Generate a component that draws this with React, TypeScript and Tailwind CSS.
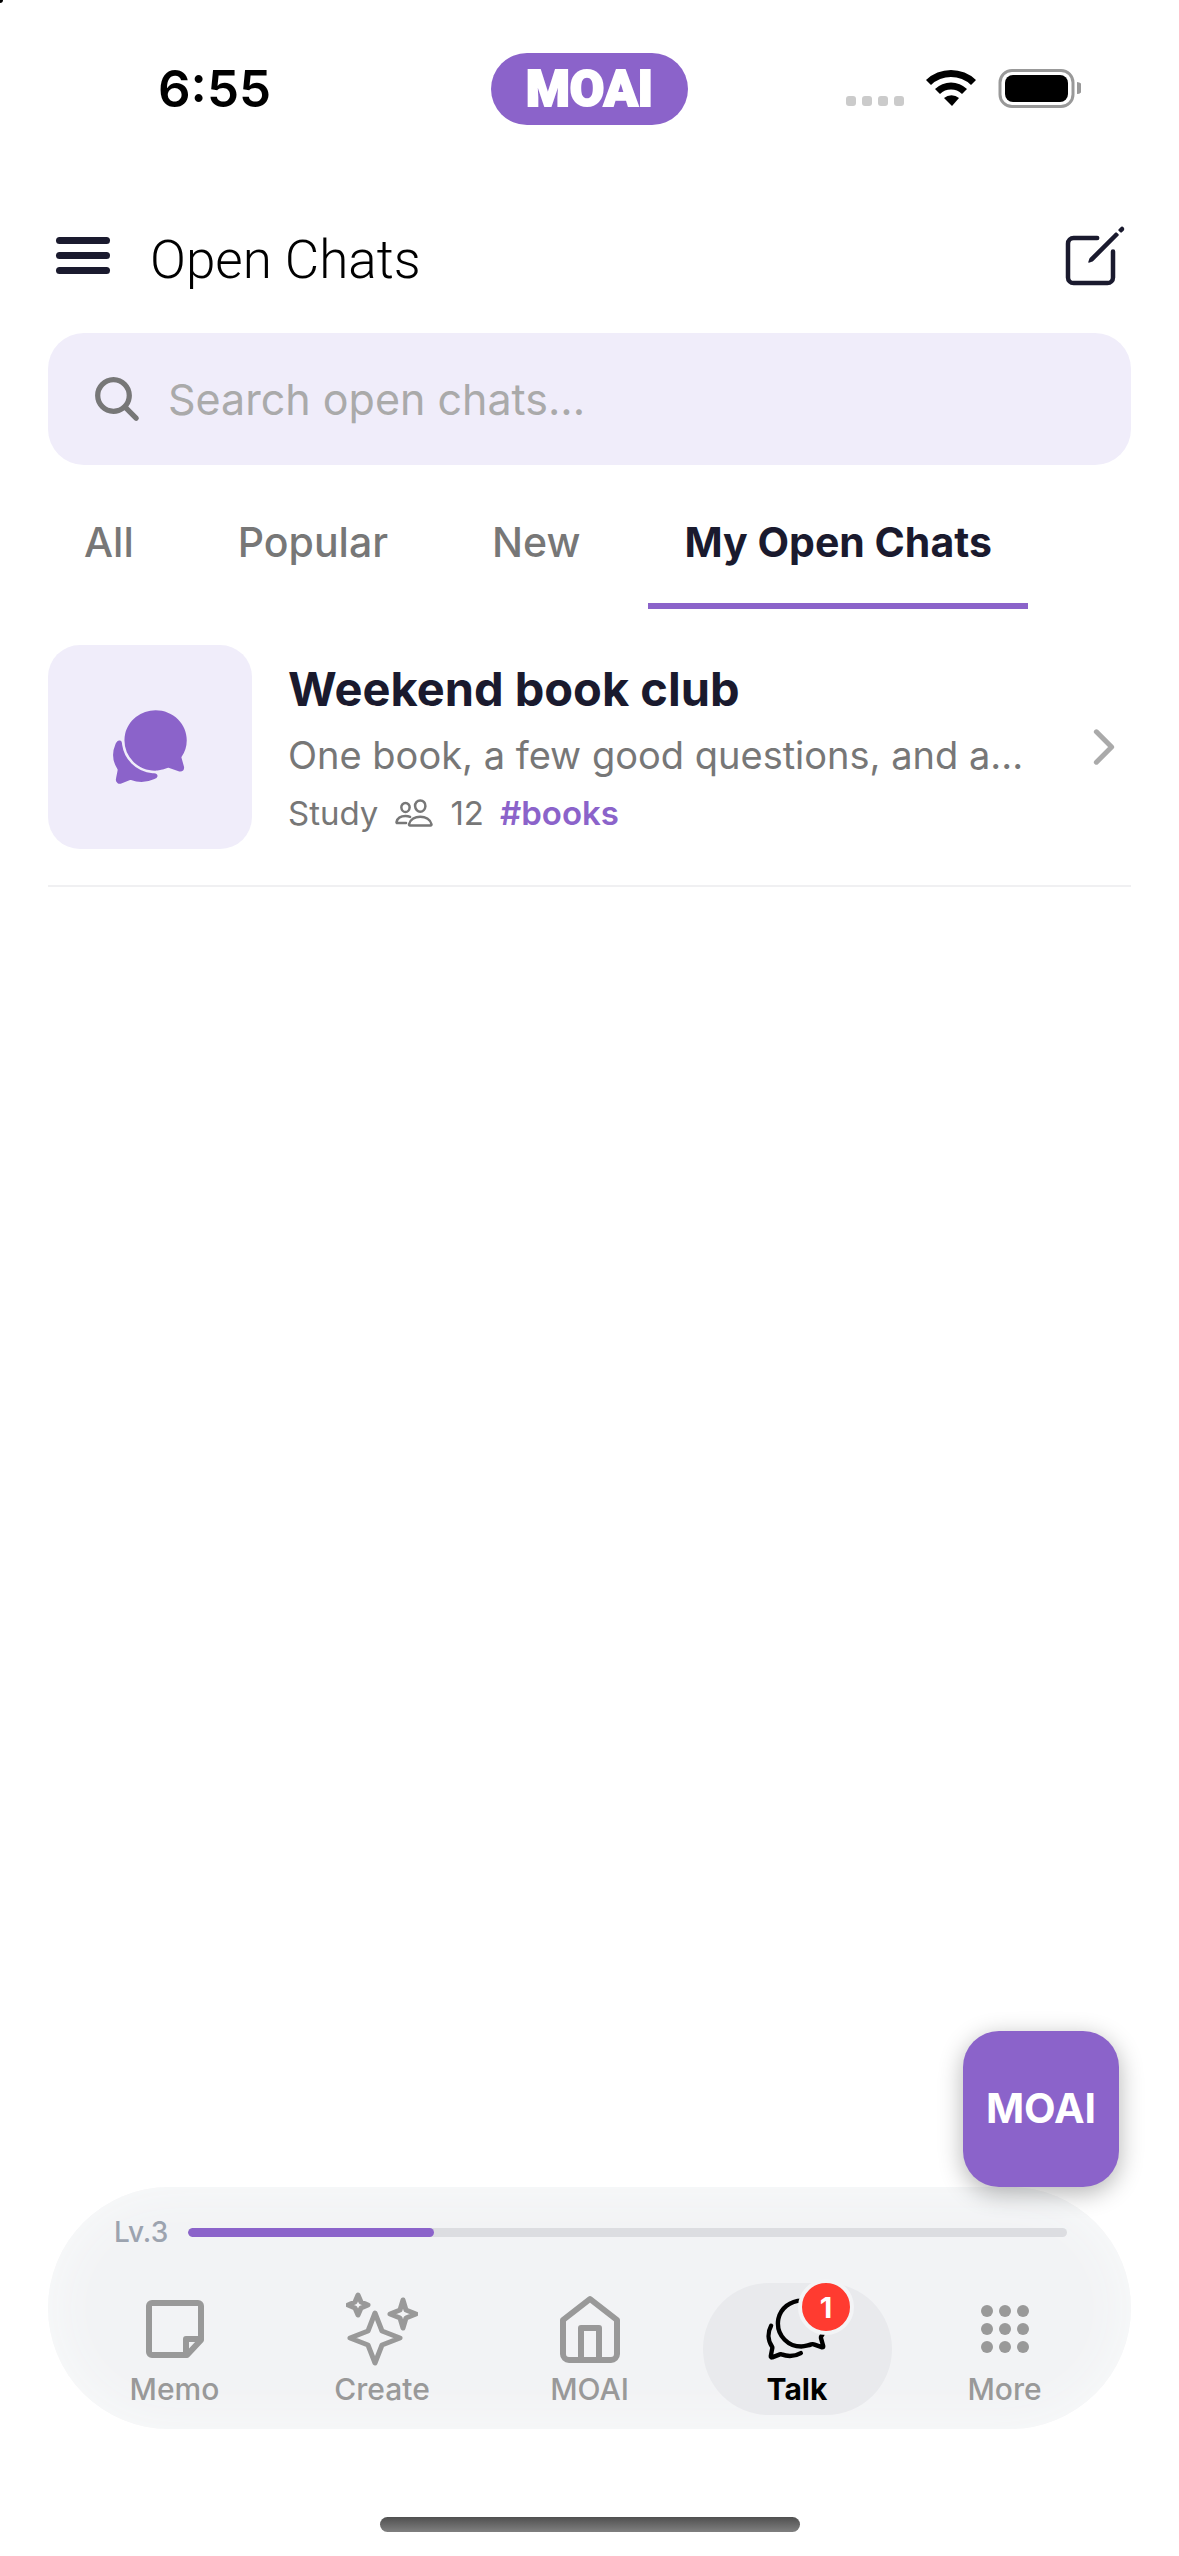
import React from "react";
import clsx from "clsx";
import {
  IoChatbubbles,
  IoChatbubblesOutline,
  IoChevronForward,
  IoCreateOutline,
  IoPeopleOutline,
  IoSearch,
} from "react-icons/io5";

const tabs = ["All", "Popular", "New", "My Open Chats"];

const rooms = [
  {
    name: "Weekend book club",
    description: "One book, a few good questions, and a...",
    category: "Study",
    members: 12,
    tag: "#books",
  },
];

const stroke = {
  fill: "none",
  stroke: "currentColor",
  strokeLinecap: "round" as const,
  strokeLinejoin: "round" as const,
};

function MemoIcon() {
  return (
    <svg viewBox="0 0 60 60" className="size-[60px]" {...stroke} strokeWidth="6">
      <path d="M7 4H53a3 3 0 0 1 3 3V41L42 56H7a3 3 0 0 1-3-3V7a3 3 0 0 1 3-3z" />
      <path d="M41 54V40H55" />
    </svg>
  );
}

function CreateIcon() {
  return (
    <svg viewBox="0 0 72 74" className="h-[74px] w-[72px]" {...stroke} strokeWidth="5">
      <path d="M29 21l7 18 18 7-18 7-7 18-7-18-18-7 18-7z" />
      <path d="M57 8l3 10 10 4-10 4-3 10-3-10-10-4 10-4z" />
      <path d="M12 3l3 7 7 3-7 3-3 7-3-7-7-3 7-3z" />
    </svg>
  );
}

function HomeIcon() {
  return (
    <svg viewBox="0 0 60 68" className="h-[68px] w-[60px]" {...stroke} strokeWidth="6">
      <path d="M3 25L30 4l27 21v34a6 6 0 0 1-6 6H9a6 6 0 0 1-6-6z" />
      <path d="M21 64V33H39V64" />
    </svg>
  );
}

function MoreIcon() {
  return (
    <svg viewBox="0 0 48 50" className="h-[50px] w-12" fill="currentColor">
      {[7, 25, 43].map((y) =>
        [6, 24, 42].map((x) => <circle key={`${x}-${y}`} cx={x} cy={y} r="6" />)
      )}
    </svg>
  );
}

function StatusBar() {
  return (
    <div className="grid h-[178px] grid-cols-3 items-center">
      <p className="pl-[158px] text-[51px] leading-[60px] font-semibold text-black">
        6:55
      </p>
      <div className="flex h-[72px] w-[197px] items-center justify-center justify-self-center rounded-full bg-[#8b63ca] font-[Roboto,sans-serif] text-[50px] leading-none font-black text-white [-webkit-text-stroke:2px_white]">
        MOAI
      </div>
      <div className="flex items-center justify-end pr-[98px]">
        <svg viewBox="0 0 236 40" className="h-10 w-[236px]">
          {[0, 16, 32, 48].map((x) => (
            <rect key={x} x={x + 1} y="27" width="10" height="10" rx="3" fill="#cbcbcb" />
          ))}
          <path d="M81 11a36 36 0 0 1 50 0l-5 5a29 29 0 0 0-40 0z" />
          <path d="M90 20a23 23 0 0 1 32 0l-5 5a16 16 0 0 0-22 0z" />
          <path d="M99 29a12 12 0 0 1 15 0l-7 8z" />
          <rect x="155" y="1.5" width="73" height="36" rx="12" fill="none" stroke="#999" strokeWidth="3" />
          <rect x="160" y="6" width="63" height="27" rx="8" />
          <path d="M232 13a6 6 0 0 1 0 12z" fill="#999" />
        </svg>
      </div>
    </div>
  );
}

function Header() {
  return (
    <header className="flex h-[155px] items-center gap-10 pr-12 pl-14">
      <button aria-label="Menu" className="flex w-[54px] flex-col gap-2">
        <span className="h-[7px] w-full rounded-full bg-[#1a1a2e]" />
        <span className="h-[7px] w-full rounded-full bg-[#1a1a2e]" />
        <span className="h-[7px] w-full rounded-full bg-[#1a1a2e]" />
      </button>
      <h1 className="flex-1 pt-2 font-[Roboto,sans-serif] text-[53px] leading-[64px] font-light text-black">
        Open Chats
      </h1>
      <button aria-label="New open chat" className="text-[#1a1a2e]">
        <IoCreateOutline size={72} />
      </button>
    </header>
  );
}

function RoomRow({ room }: { room: (typeof rooms)[number] }) {
  return (
    <a
      href="#room"
      className="flex items-center gap-9 border-b-2 border-[#f0f0f2] pt-9 pb-9"
    >
      <div className="flex size-[204px] shrink-0 items-center justify-center rounded-[32px] bg-[#f0edfa] text-[#8b63ca]">
        <IoChatbubbles size={84} />
      </div>
      <div className="min-w-0 flex-1">
        <h2 className="text-[47px] leading-[60px] font-bold text-[#1a1a2e]">
          {room.name}
        </h2>
        <p className="mt-2 truncate text-[38px] leading-[56px] text-[#777]">
          {room.description}
        </p>
        <div className="mt-2 flex items-center gap-4 text-[33px] leading-[44px] text-[#777]">
          <span>{room.category}</span>
          <IoPeopleOutline size={40} />
          <span>{room.members}</span>
          <span className="font-semibold text-[#8b63ca]">{room.tag}</span>
        </div>
      </div>
      <IoChevronForward size={54} className="shrink-0 text-[#aaa]" />
    </a>
  );
}

function NavItem({
  label,
  active,
  badge,
  children,
}: {
  label: string;
  active?: boolean;
  badge?: number;
  children: React.ReactNode;
}) {
  return (
    <button
      className={clsx(
        "flex h-[132px] w-[189px] flex-col items-center justify-end rounded-full pb-1",
        active ? "bg-[#e9eaed] font-bold text-black" : "font-medium text-[#999]"
      )}
    >
      <span className="relative flex h-[76px] items-center justify-center">
        {children}
        {badge && (
          <span className="absolute -top-3 left-9 flex size-14 items-center justify-center rounded-full border-4 border-[#f3f4f6] bg-[#ff3b30] text-[29px] leading-none font-bold text-white">
            {badge}
          </span>
        )}
      </span>
      <span className="text-[30px] leading-[44px]">{label}</span>
    </button>
  );
}

function BottomNav() {
  return (
    <nav className="rounded-full bg-[#f2f3f5] px-8 pt-[25px] pb-[14px] shadow-[inset_0_0_50px_#f9fbfb]">
      <div className="flex items-center gap-5 pr-8 pl-[34px]">
        <span className="text-[28px] leading-[40px] font-medium text-[#9ca3af]">
          Lv.3
        </span>
        <div className="h-[9px] flex-1 overflow-hidden rounded-full bg-[#dcdde1]">
          <div className="h-full w-[28%] rounded-full bg-[#8b63ca]" />
        </div>
      </div>
      <div className="mt-[31px] flex justify-between">
        <NavItem label="Memo">
          <MemoIcon />
        </NavItem>
        <NavItem label="Create">
          <CreateIcon />
        </NavItem>
        <NavItem label="MOAI">
          <HomeIcon />
        </NavItem>
        <NavItem label="Talk" active badge={1}>
          <IoChatbubblesOutline size={70} />
        </NavItem>
        <NavItem label="More">
          <MoreIcon />
        </NavItem>
      </div>
    </nav>
  );
}

function App() {
  return (
    <div className="flex min-h-screen flex-col bg-white font-[Inter,sans-serif]">
      <span className="absolute top-0 left-0 size-[3px] rounded-br-full bg-black" />
      <StatusBar />
      <Header />
      <main className="flex-1 px-12">
        <label className="flex h-[132px] items-center gap-6 rounded-[36px] bg-[#f0edfa] px-[42px]">
          <IoSearch size={54} className="text-[#777]" />
          <input
            type="text"
            aria-label="Search open chats"
            placeholder="Search open chats..."
            className="min-w-0 flex-1 bg-transparent text-[43px] leading-[56px] outline-none placeholder:text-[#aaa]"
          />
        </label>
        <div role="tablist" className="flex gap-8 pt-7">
          {tabs.map((tab) => (
            <button
              key={tab}
              role="tab"
              aria-selected={tab === "My Open Chats"}
              className={clsx(
                "border-b-[6px] px-9 pt-6 pb-9 text-[41px] leading-[50px]",
                tab === "My Open Chats"
                  ? "border-[#8b63ca] font-bold text-[#1a1a2e]"
                  : "border-transparent font-medium text-[#777]"
              )}
            >
              {tab}
            </button>
          ))}
        </div>
        {rooms.map((room) => (
          <RoomRow key={room.name} room={room} />
        ))}
      </main>
      <footer className="px-12 pb-6">
        <div className="flex justify-end pr-3">
          <button className="relative flex size-[156px] items-center justify-center rounded-[36px] bg-[#8b63ca] text-[41px] font-bold text-white shadow-[0_6px_24px_rgba(0,0,0,0.3)]">
            MOAI
          </button>
        </div>
        <BottomNav />
        <div className="mx-auto mt-[88px] h-[15px] w-[420px] rounded-full bg-linear-to-b from-[#505050] to-[#808080]" />
      </footer>
    </div>
  );
}

export default App;
